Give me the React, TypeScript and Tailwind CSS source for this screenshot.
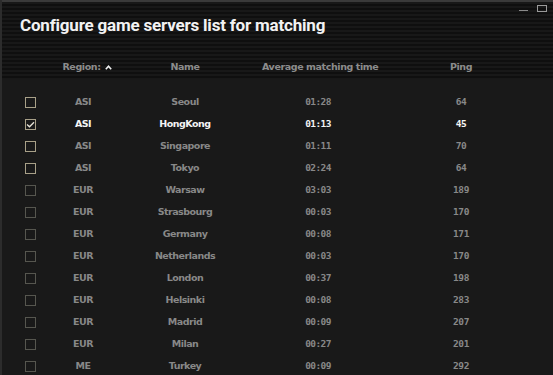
import React, { FC } from "react";

type Server = {
  region: string;
  name: string;
  time: string;
  ping: number;
  checked?: boolean;
};

const servers: Server[] = [
  { region: "ASI", name: "Seoul", time: "01:28", ping: 64 },
  { region: "ASI", name: "HongKong", time: "01:13", ping: 45, checked: true },
  { region: "ASI", name: "Singapore", time: "01:11", ping: 70 },
  { region: "ASI", name: "Tokyo", time: "02:24", ping: 64 },
  { region: "EUR", name: "Warsaw", time: "03:03", ping: 189 },
  { region: "EUR", name: "Strasbourg", time: "00:03", ping: 170 },
  { region: "EUR", name: "Germany", time: "00:08", ping: 171 },
  { region: "EUR", name: "Netherlands", time: "00:03", ping: 170 },
  { region: "EUR", name: "London", time: "00:37", ping: 198 },
  { region: "EUR", name: "Helsinki", time: "00:08", ping: 283 },
  { region: "EUR", name: "Madrid", time: "00:09", ping: 207 },
  { region: "EUR", name: "Milan", time: "00:27", ping: 201 },
  { region: "ME", name: "Turkey", time: "00:09", ping: 292 },
];

const cols = "grid grid-cols-[56px_50px_154px_112px_174px]";
const mono = { fontFamily: '"DejaVu Sans Mono", monospace' };

const Checkbox: FC<{ checked?: boolean; bright: boolean }> = ({ checked, bright }) => (
  <span
    className={
      bright
        ? "w-[11px] h-[11px] border border-[#a8a088] flex items-center justify-center"
        : "w-[11px] h-[11px] border border-[#56564f] flex items-center justify-center"
    }
  >
    {checked && (
      <svg width="9" height="7" viewBox="0 0 9 7" fill="none">
        <path d="M1 3.5 L3.5 5.8 L8 1.2" stroke="#e8e4d8" strokeWidth="1.3" />
      </svg>
    )}
  </span>
);

const App: FC = () => {
  return (
    <div
      className="w-[553px] h-[375px] overflow-hidden bg-[#191919] border-l-2 border-[#2c2c2c] relative"
      style={{ fontFamily: '"DejaVu Sans", sans-serif' }}
    >
      {/* header */}
      <div className="h-[79px] border-t-2 border-[#3a3a3a] bg-[repeating-linear-gradient(180deg,#181818_0px,#181818_2px,#0f0f0f_2px,#0f0f0f_4px)] relative">
        <div className="absolute right-[6px] top-[3px] flex items-end gap-[9px]">
          <span className="w-[9px] h-[1px] bg-[#8a8a8a] mb-[1px]" />
          <span className="w-[10px] h-[7px] border border-[#9a9a9a]" />
        </div>
        <h1
          className="pl-[18px] pt-[13px] text-[17px] leading-[20px] font-bold text-[#f2f2f2] tracking-[-0.2px]"
          style={{ fontFamily: 'Roboto, "DejaVu Sans", sans-serif' }}
        >
          Configure game servers list for matching
        </h1>
        <div className={`${cols} mt-[26px] text-[9.5px] leading-[12px] font-bold text-[#8c8c8c] tracking-[-0.4px]`}>
          <div />
          <div className="flex items-center justify-center gap-[4px] pl-[8px]">
            Region:
            <svg width="7" height="5" viewBox="0 0 7 5" className="shrink-0">
              <path d="M0.8 4.2 L3.5 1.2 L6.2 4.2" stroke="#f0f0f0" strokeWidth="1.6" fill="none" />
            </svg>
          </div>
          <div className="text-center">Name</div>
          <div className="text-center whitespace-nowrap">Average matching time</div>
          <div className="text-center">Ping</div>
        </div>
      </div>

      {/* rows */}
      <div className="pt-[12px]">
        {servers.map((s, i) => {
          const bright = s.region === "ASI";
          const text = s.checked ? "text-[#f4f4f4]" : "text-[#888888]";
          return (
            <div
              key={i}
              className={`${cols} h-[22px] items-center text-[9.5px] font-bold tracking-[-0.5px] ${text}`}
            >
              <div className="flex justify-center">
                <Checkbox checked={s.checked} bright={bright} />
              </div>
              <div className="text-center">{s.region}</div>
              <div className="text-center">{s.name}</div>
              <div className="text-center tracking-[-0.6px]" style={mono}>
                {s.time}
              </div>
              <div className="text-center tracking-[-0.4px]" style={mono}>
                {s.ping}
              </div>
            </div>
          );
        })}
      </div>
    </div>
  );
};

export default App;
